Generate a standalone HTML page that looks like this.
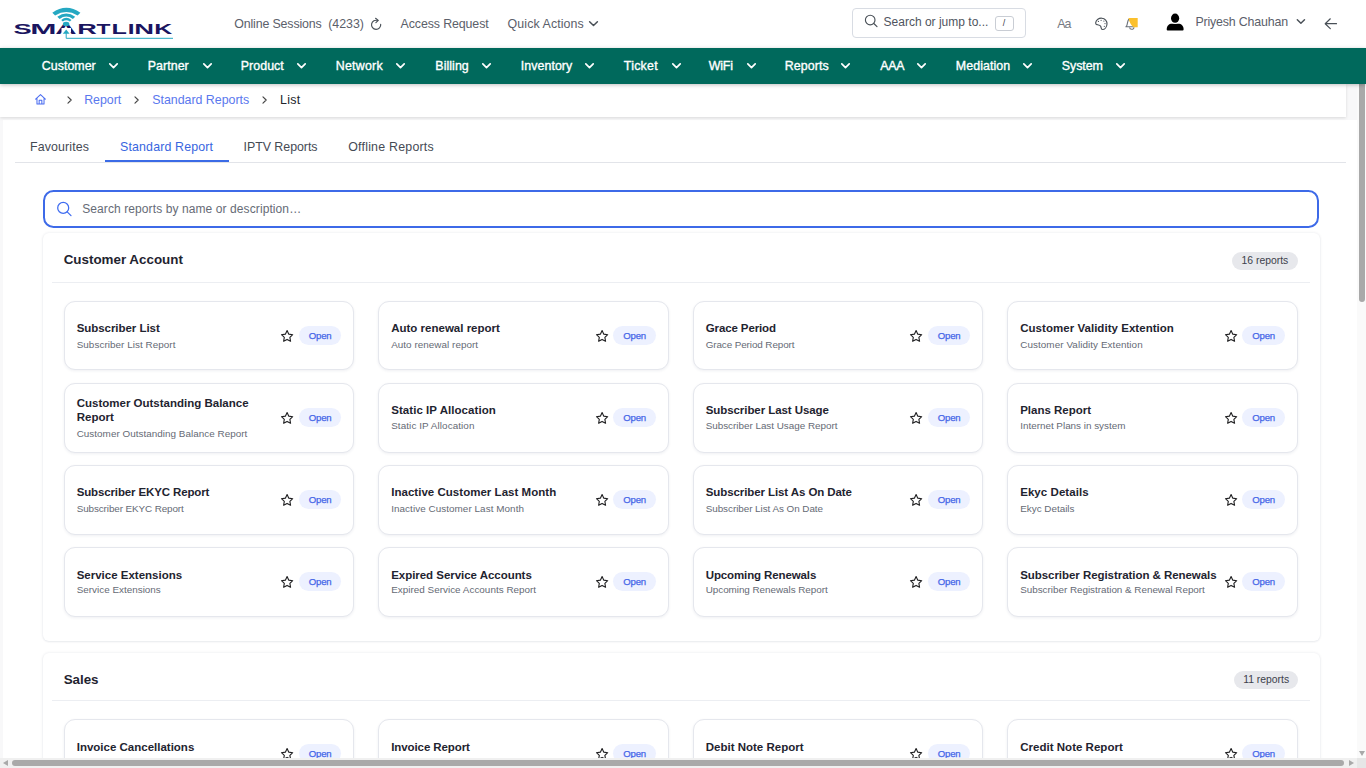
<!DOCTYPE html>
<html lang="en">
<head>
<meta charset="utf-8">
<title>Standard Reports</title>
<style>
*{box-sizing:border-box;margin:0;padding:0}
html,body{width:1366px;height:768px;overflow:hidden}
body{font-family:"Liberation Sans",sans-serif;background:#f8f8f9;color:#1f2430;position:relative;font-size:12.8px}
svg{display:block;overflow:visible}
#top{position:absolute;left:0;top:0;width:1366px;height:48px;background:#fff}
#top .t{position:absolute;top:16px;font-size:12.8px;line-height:16px;color:#5b606a;white-space:nowrap}
#top svg{position:absolute}
#gsearch{position:absolute;left:852px;top:8px;width:174px;height:29.5px;border:1px solid #d8dce3;border-radius:4px;background:#fff}
#gsearch span{position:absolute;top:5px;font-size:12px;line-height:16px;color:#4f545e;white-space:nowrap}
#gsearch kbd{position:absolute;left:141.500px;top:7px;width:19px;height:14.500px;border:1px solid #c9cdd4;border-radius:3px;font-family:"Liberation Sans",sans-serif;font-size:9px;line-height:12.500px;text-align:center;color:#3c4048}
#nav{position:absolute;left:0;top:48px;width:1366px;height:36px;background:#00695c;box-shadow:0 1px 4px rgba(0,0,0,.25);z-index:5}
#nav .n{position:absolute;top:10px;font-size:12.8px;line-height:16px;color:#fff;white-space:nowrap;-webkit-text-stroke:0.35px #fff}
#nav svg{position:absolute;top:15px;width:9px;height:6px}
#bc{position:absolute;left:0;top:84px;width:1346px;height:33px;background:#fff;box-shadow:0 1px 3px rgba(0,0,0,.13)}
#bc .b{position:absolute;top:8px;font-size:12.8px;line-height:16px;white-space:nowrap;color:#5a78ee}
#bc svg{position:absolute}
#main{position:absolute;left:3px;top:120px;width:1354px;height:648px;background:#fff}
.tab{position:absolute;top:139px;font-size:12.8px;line-height:16px;color:#454a54;white-space:nowrap}
.tab.act{color:#3866e0}
#tabline{position:absolute;left:15px;top:162px;width:1331px;height:1px;background:#e2e4e9}
#tabact{position:absolute;left:105px;top:159.5px;width:124px;height:2.5px;background:#3b6be6}
#search{position:absolute;left:42.600px;top:190px;width:1276px;height:38px;border:2px solid #3d6ae8;border-radius:10.500px;background:#fff}
#search span{position:absolute;top:9.500px;font-size:12px;line-height:14px;color:#666b76;white-space:nowrap}
#search svg{position:absolute}
.sec{position:absolute;left:42.5px;width:1277px;background:#fff;border-radius:6px;box-shadow:0 0 3px rgba(20,30,70,.10),0 1px 2px rgba(20,30,70,.05)}
.sec h2{position:absolute;left:21.200px;top:17.500px;font-size:13.4px;line-height:18px;font-weight:bold;color:#1f2430;white-space:nowrap}
.sec .badge{position:absolute;right:21.500px;top:19px;width:66.200px;height:18.400px;border-radius:9.200px;background:#e7e8ec;font-size:10.4px;line-height:18.400px;color:#3c414b;white-space:nowrap;text-align:center}
.sec .hr{position:absolute;left:9px;top:49.5px;width:1258px;height:1px;background:#eceef2}
.card{position:absolute;width:290.5px;height:69.8px;border:1px solid #e5e7ed;border-radius:11px;background:#fff;box-shadow:0 1px 3px rgba(30,40,90,.07)}
.card .ti{position:absolute;left:12.200px;font-size:11.5px;line-height:14px;font-weight:bold;color:#1f2430;white-space:nowrap}
.card .de{position:absolute;left:12.200px;font-size:9.9px;line-height:12px;color:#656a75;white-space:nowrap}
.card .open{position:absolute;left:234.400px;top:24.200px;width:42.5px;height:19.2px;border-radius:10px;background:#edf1ff;color:#4566e8;font-size:9.6px;line-height:19.2px;text-align:center;letter-spacing:-0.2px;-webkit-text-stroke:0.25px #4566e8}
.card svg{position:absolute;left:215.700px;top:27.400px;width:14.200px;height:14.200px}
#vsb{position:absolute;left:1357px;top:84px;width:9px;height:674px;background:#fafafa}
#vsb i{position:absolute;left:2px;top:0;width:6px;height:218px;background:#a9a9a9;border-radius:0 0 3px 3px}
#hsb{position:absolute;left:0;top:758px;width:1366px;height:10px;background:#f0f0f0}
#hsb i{position:absolute;left:12px;top:2px;width:1332px;height:6px;background:#a9a9a9;border-radius:3px}
.arr{position:absolute;width:0;height:0}
</style>
</head>
<body>
<div id="main"></div>
<div id="bc"><svg viewBox="0 0 24 24" style="left:33.700px;top:9.200px;width:13px;height:13px"><path d="M3 11.5L12 3l9 8.500M5.500 10v10.500h13V10M9.500 20.500v-7h5v7" fill="none" stroke="#4a6cf0" stroke-width="1.9" stroke-linejoin="round" stroke-linecap="round"/></svg><svg viewBox="0 0 6 9" style="left:66.5px;top:11.500px;width:5.500px;height:8px"><path d="M1 1l3.600 3.500L1 8" fill="none" stroke="#444" stroke-width="1.300" stroke-linecap="round" stroke-linejoin="round"/></svg><span class="b" style="left:84.20px;font-size:12.4px;letter-spacing:-0.022px;">Report</span><svg viewBox="0 0 6 9" style="left:134.2px;top:11.500px;width:5.500px;height:8px"><path d="M1 1l3.600 3.500L1 8" fill="none" stroke="#444" stroke-width="1.300" stroke-linecap="round" stroke-linejoin="round"/></svg><span class="b" style="left:152.20px;font-size:12.4px;letter-spacing:-0.006px;">Standard Reports</span><svg viewBox="0 0 6 9" style="left:262.3px;top:11.500px;width:5.500px;height:8px"><path d="M1 1l3.600 3.500L1 8" fill="none" stroke="#444" stroke-width="1.300" stroke-linecap="round" stroke-linejoin="round"/></svg><span class="b" style="left:280.00px;font-size:12.4px;letter-spacing:0.315px;color:#22252b">List</span></div>
<span class="tab" style="left:30.00px;font-size:12.4px;letter-spacing:0.117px;">Favourites</span><span class="tab act" style="left:120.00px;font-size:12.4px;letter-spacing:0.152px;">Standard Report</span><span class="tab" style="left:243.50px;font-size:12.4px;letter-spacing:-0.028px;">IPTV Reports</span><span class="tab" style="left:348.20px;font-size:12.4px;letter-spacing:0.222px;">Offline Reports</span><div id="tabline"></div><div id="tabact"></div>
<div id="search"><svg viewBox="0 0 40 34" style="left:0;top:0;width:40px;height:34px"><circle cx="18.200" cy="15.900" r="5.500" fill="none" stroke="#3f6cf0" stroke-width="1.250"/><path d="M22.200 19.900L26 23.600" stroke="#3f6cf0" stroke-width="1.250" stroke-linecap="round"/></svg><span class="" style="left:37.60px;font-size:12px;letter-spacing:0.095px;">Search reports by name or description…</span></div>
<div class="sec" style="top:233.0px;height:407.5px"><h2 style="top:17.50px;letter-spacing:-0.005px">Customer Account</h2><div class="badge" style="top:18.60px;width:66.2px">16 reports</div><div class="hr" style="top:49.00px"></div><div class="card" style="left:21.0px;top:67.60px"><div class="ti" style="top:19.40px;letter-spacing:-0.050px;">Subscriber List</div><div class="de" style="top:37.40px;letter-spacing:0.049px;">Subscriber List Report</div><svg viewBox="0 0 24 24"><path d="M12 2.6l2.9 6.1 6.6.9-4.8 4.6 1.2 6.6L12 17.6l-5.9 3.2 1.2-6.6L2.5 9.6l6.6-.9z" fill="none" stroke="#1d1d1f" stroke-width="1.850" stroke-linejoin="round"/></svg><div class="open">Open</div></div><div class="card" style="left:335.5px;top:67.60px"><div class="ti" style="top:19.40px;letter-spacing:0.004px;">Auto renewal report</div><div class="de" style="top:37.40px;letter-spacing:0.038px;">Auto renewal report</div><svg viewBox="0 0 24 24"><path d="M12 2.6l2.9 6.1 6.6.9-4.8 4.6 1.2 6.6L12 17.6l-5.9 3.2 1.2-6.6L2.5 9.6l6.6-.9z" fill="none" stroke="#1d1d1f" stroke-width="1.850" stroke-linejoin="round"/></svg><div class="open">Open</div></div><div class="card" style="left:650.0px;top:67.60px"><div class="ti" style="top:19.40px;letter-spacing:-0.112px;">Grace Period</div><div class="de" style="top:37.40px;letter-spacing:-0.097px;">Grace Period Report</div><svg viewBox="0 0 24 24"><path d="M12 2.6l2.9 6.1 6.6.9-4.8 4.6 1.2 6.6L12 17.6l-5.9 3.2 1.2-6.6L2.5 9.6l6.6-.9z" fill="none" stroke="#1d1d1f" stroke-width="1.850" stroke-linejoin="round"/></svg><div class="open">Open</div></div><div class="card" style="left:964.5px;top:67.60px"><div class="ti" style="top:19.40px;letter-spacing:0.037px;">Customer Validity Extention</div><div class="de" style="top:37.40px;letter-spacing:0.073px;">Customer Validity Extention</div><svg viewBox="0 0 24 24"><path d="M12 2.6l2.9 6.1 6.6.9-4.8 4.6 1.2 6.6L12 17.6l-5.9 3.2 1.2-6.6L2.5 9.6l6.6-.9z" fill="none" stroke="#1d1d1f" stroke-width="1.850" stroke-linejoin="round"/></svg><div class="open">Open</div></div><div class="card" style="left:21.0px;top:150.00px"><div class="ti" style="top:12.00px;">Customer Outstanding Balance<br>Report</div><div class="de" style="top:44.00px;letter-spacing:0.028px;">Customer Outstanding Balance Report</div><svg viewBox="0 0 24 24"><path d="M12 2.6l2.9 6.1 6.6.9-4.8 4.6 1.2 6.6L12 17.6l-5.9 3.2 1.2-6.6L2.5 9.6l6.6-.9z" fill="none" stroke="#1d1d1f" stroke-width="1.850" stroke-linejoin="round"/></svg><div class="open">Open</div></div><div class="card" style="left:335.5px;top:150.00px"><div class="ti" style="top:19.00px;letter-spacing:0.055px;">Static IP Allocation</div><div class="de" style="top:36.00px;letter-spacing:0.086px;">Static IP Allocation</div><svg viewBox="0 0 24 24"><path d="M12 2.6l2.9 6.1 6.6.9-4.8 4.6 1.2 6.6L12 17.6l-5.9 3.2 1.2-6.6L2.5 9.6l6.6-.9z" fill="none" stroke="#1d1d1f" stroke-width="1.850" stroke-linejoin="round"/></svg><div class="open">Open</div></div><div class="card" style="left:650.0px;top:150.00px"><div class="ti" style="top:19.00px;letter-spacing:-0.070px;">Subscriber Last Usage</div><div class="de" style="top:36.00px;letter-spacing:-0.019px;">Subscriber Last Usage Report</div><svg viewBox="0 0 24 24"><path d="M12 2.6l2.9 6.1 6.6.9-4.8 4.6 1.2 6.6L12 17.6l-5.9 3.2 1.2-6.6L2.5 9.6l6.6-.9z" fill="none" stroke="#1d1d1f" stroke-width="1.850" stroke-linejoin="round"/></svg><div class="open">Open</div></div><div class="card" style="left:964.5px;top:150.00px"><div class="ti" style="top:19.00px;letter-spacing:-0.011px;">Plans Report</div><div class="de" style="top:36.00px;letter-spacing:-0.006px;">Internet Plans in system</div><svg viewBox="0 0 24 24"><path d="M12 2.6l2.9 6.1 6.6.9-4.8 4.6 1.2 6.6L12 17.6l-5.9 3.2 1.2-6.6L2.5 9.6l6.6-.9z" fill="none" stroke="#1d1d1f" stroke-width="1.850" stroke-linejoin="round"/></svg><div class="open">Open</div></div><div class="card" style="left:21.0px;top:231.90px"><div class="ti" style="top:19.10px;letter-spacing:-0.134px;">Subscriber EKYC Report</div><div class="de" style="top:37.10px;letter-spacing:-0.102px;">Subscriber EKYC Report</div><svg viewBox="0 0 24 24"><path d="M12 2.6l2.9 6.1 6.6.9-4.8 4.6 1.2 6.6L12 17.6l-5.9 3.2 1.2-6.6L2.5 9.6l6.6-.9z" fill="none" stroke="#1d1d1f" stroke-width="1.850" stroke-linejoin="round"/></svg><div class="open">Open</div></div><div class="card" style="left:335.5px;top:231.90px"><div class="ti" style="top:19.10px;letter-spacing:0.028px;">Inactive Customer Last Month</div><div class="de" style="top:37.10px;letter-spacing:0.058px;">Inactive Customer Last Month</div><svg viewBox="0 0 24 24"><path d="M12 2.6l2.9 6.1 6.6.9-4.8 4.6 1.2 6.6L12 17.6l-5.9 3.2 1.2-6.6L2.5 9.6l6.6-.9z" fill="none" stroke="#1d1d1f" stroke-width="1.850" stroke-linejoin="round"/></svg><div class="open">Open</div></div><div class="card" style="left:650.0px;top:231.90px"><div class="ti" style="top:19.10px;letter-spacing:-0.089px;">Subscriber List As On Date</div><div class="de" style="top:37.10px;letter-spacing:-0.049px;">Subscriber List As On Date</div><svg viewBox="0 0 24 24"><path d="M12 2.6l2.9 6.1 6.6.9-4.8 4.6 1.2 6.6L12 17.6l-5.9 3.2 1.2-6.6L2.5 9.6l6.6-.9z" fill="none" stroke="#1d1d1f" stroke-width="1.850" stroke-linejoin="round"/></svg><div class="open">Open</div></div><div class="card" style="left:964.5px;top:231.90px"><div class="ti" style="top:19.10px;letter-spacing:0.055px;">Ekyc Details</div><div class="de" style="top:37.10px;letter-spacing:-0.006px;">Ekyc Details</div><svg viewBox="0 0 24 24"><path d="M12 2.6l2.9 6.1 6.6.9-4.8 4.6 1.2 6.6L12 17.6l-5.9 3.2 1.2-6.6L2.5 9.6l6.6-.9z" fill="none" stroke="#1d1d1f" stroke-width="1.850" stroke-linejoin="round"/></svg><div class="open">Open</div></div><div class="card" style="left:21.0px;top:314.10px"><div class="ti" style="top:19.90px;letter-spacing:-0.004px;">Service Extensions</div><div class="de" style="top:35.90px;letter-spacing:0.006px;">Service Extensions</div><svg viewBox="0 0 24 24"><path d="M12 2.6l2.9 6.1 6.6.9-4.8 4.6 1.2 6.6L12 17.6l-5.9 3.2 1.2-6.6L2.5 9.6l6.6-.9z" fill="none" stroke="#1d1d1f" stroke-width="1.850" stroke-linejoin="round"/></svg><div class="open">Open</div></div><div class="card" style="left:335.5px;top:314.10px"><div class="ti" style="top:19.90px;letter-spacing:-0.037px;">Expired Service Accounts</div><div class="de" style="top:35.90px;letter-spacing:0.019px;">Expired Service Accounts Report</div><svg viewBox="0 0 24 24"><path d="M12 2.6l2.9 6.1 6.6.9-4.8 4.6 1.2 6.6L12 17.6l-5.9 3.2 1.2-6.6L2.5 9.6l6.6-.9z" fill="none" stroke="#1d1d1f" stroke-width="1.850" stroke-linejoin="round"/></svg><div class="open">Open</div></div><div class="card" style="left:650.0px;top:314.10px"><div class="ti" style="top:19.90px;letter-spacing:-0.113px;">Upcoming Renewals</div><div class="de" style="top:35.90px;letter-spacing:-0.041px;">Upcoming Renewals Report</div><svg viewBox="0 0 24 24"><path d="M12 2.6l2.9 6.1 6.6.9-4.8 4.6 1.2 6.6L12 17.6l-5.9 3.2 1.2-6.6L2.5 9.6l6.6-.9z" fill="none" stroke="#1d1d1f" stroke-width="1.850" stroke-linejoin="round"/></svg><div class="open">Open</div></div><div class="card" style="left:964.5px;top:314.10px"><div class="ti" style="top:19.90px;letter-spacing:-0.051px;">Subscriber Registration &amp; Renewals</div><div class="de" style="top:35.90px;letter-spacing:-0.022px;">Subscriber Registration &amp; Renewal Report</div><svg viewBox="0 0 24 24"><path d="M12 2.6l2.9 6.1 6.6.9-4.8 4.6 1.2 6.6L12 17.6l-5.9 3.2 1.2-6.6L2.5 9.6l6.6-.9z" fill="none" stroke="#1d1d1f" stroke-width="1.850" stroke-linejoin="round"/></svg><div class="open">Open</div></div></div>
<div class="sec" style="top:652.5px;height:300px"><h2 style="top:18.00px;letter-spacing:-0.048px">Sales</h2><div class="badge" style="top:18.50px;width:63.7px">11 reports</div><div class="hr" style="top:47.50px"></div><div class="card" style="left:21.0px;top:66.50px"><div class="ti" style="top:20.00px;letter-spacing:0.000px;">Invoice Cancellations</div><div class="de" style="top:38.00px;">Invoice Cancellations Report</div><svg viewBox="0 0 24 24"><path d="M12 2.6l2.9 6.1 6.6.9-4.8 4.6 1.2 6.6L12 17.6l-5.9 3.2 1.2-6.6L2.5 9.6l6.6-.9z" fill="none" stroke="#1d1d1f" stroke-width="1.850" stroke-linejoin="round"/></svg><div class="open">Open</div></div><div class="card" style="left:335.5px;top:66.50px"><div class="ti" style="top:20.00px;letter-spacing:-0.087px;">Invoice Report</div><div class="de" style="top:38.00px;">Invoice Report</div><svg viewBox="0 0 24 24"><path d="M12 2.6l2.9 6.1 6.6.9-4.8 4.6 1.2 6.6L12 17.6l-5.9 3.2 1.2-6.6L2.5 9.6l6.6-.9z" fill="none" stroke="#1d1d1f" stroke-width="1.850" stroke-linejoin="round"/></svg><div class="open">Open</div></div><div class="card" style="left:650.0px;top:66.50px"><div class="ti" style="top:20.00px;letter-spacing:0.009px;">Debit Note Report</div><div class="de" style="top:38.00px;">Debit Note Report</div><svg viewBox="0 0 24 24"><path d="M12 2.6l2.9 6.1 6.6.9-4.8 4.6 1.2 6.6L12 17.6l-5.9 3.2 1.2-6.6L2.5 9.6l6.6-.9z" fill="none" stroke="#1d1d1f" stroke-width="1.850" stroke-linejoin="round"/></svg><div class="open">Open</div></div><div class="card" style="left:964.5px;top:66.50px"><div class="ti" style="top:20.00px;letter-spacing:0.021px;">Credit Note Report</div><div class="de" style="top:38.00px;">Credit Note Report</div><svg viewBox="0 0 24 24"><path d="M12 2.6l2.9 6.1 6.6.9-4.8 4.6 1.2 6.6L12 17.6l-5.9 3.2 1.2-6.6L2.5 9.6l6.6-.9z" fill="none" stroke="#1d1d1f" stroke-width="1.850" stroke-linejoin="round"/></svg><div class="open">Open</div></div></div>
<div id="top"><svg id="logo" viewBox="0 0 200 48" style="left:0;top:0;width:200px;height:48px">
<text y="33.900" font-family="'Liberation Sans',sans-serif" font-weight="bold" font-size="15.4" fill="#1a1560"><tspan x="13.41" textLength="18.15" lengthAdjust="spacingAndGlyphs">S</tspan><tspan x="30.19" textLength="26.22" lengthAdjust="spacingAndGlyphs">M</tspan><tspan x="55.36" textLength="21.30" lengthAdjust="spacingAndGlyphs">A</tspan><tspan x="77.38" textLength="19.59" lengthAdjust="spacingAndGlyphs">R</tspan><tspan x="96.45" textLength="13.90" lengthAdjust="spacingAndGlyphs">T</tspan><tspan x="111.42" textLength="15.36" lengthAdjust="spacingAndGlyphs">L</tspan><tspan x="127.67" textLength="6.76" lengthAdjust="spacingAndGlyphs">I</tspan><tspan x="134.27" textLength="19.77" lengthAdjust="spacingAndGlyphs">N</tspan><tspan x="154.23" textLength="18.02" lengthAdjust="spacingAndGlyphs">K</tspan></text>
<rect x="61.500" y="28" width="9.500" height="4.500" fill="#fff"/>
<g fill="#25a8c2" transform="translate(0,0.3)">
<path d="M52.300 12.400 Q66.300 2.600 80.400 12.400 L77.600 15.200 Q66.300 8.300 55.100 15.200 Z"/>
<path d="M57.300 16.400 Q66.300 9.900 75.200 16.400 L72.900 18.700 Q66.300 13.800 59.600 18.700 Z"/>
<path d="M61.200 19.700 Q66.300 15.300 71.500 19.700 L69.900 21.300 Q66.300 18.400 62.800 21.300 Z"/>
</g>
<ellipse cx="66.100" cy="23.900" rx="3.200" ry="2.200" fill="#25a8c2"/>
<path d="M66.200 29.400 L62.800 33.700 H69.600 Z" fill="#25a8c2"/>
<path d="M66.200 33 V38.300 H173" fill="none" stroke="#25a8c2" stroke-width="1"/>
</svg><span class="t" style="left:234.20px;font-size:12.4px;letter-spacing:-0.138px;">Online Sessions</span><span class="t" style="left:328.20px;font-size:12.4px;letter-spacing:-0.026px;">(4233)</span><span class="t" style="left:400.60px;font-size:12.4px;letter-spacing:-0.111px;">Access Request</span><span class="t" style="left:507.60px;font-size:12.4px;letter-spacing:0.086px;">Quick Actions</span><div id="gsearch"><span class="" style="left:30.60px;font-size:12px;">Search or jump to...</span><kbd>/</kbd></div><span class="t" style="left:1057.20px;font-size:12.4px;letter-spacing:-0.845px;top:15.500px;color:#777b84">Aa</span><span class="t" style="left:1195.40px;font-size:12.4px;letter-spacing:-0.167px;top:14px">Priyesh Chauhan</span><svg id="hicons" viewBox="0 0 1366 48" style="left:0;top:0;width:1366px;height:48px">
<g fill="none" stroke="#495057" stroke-linecap="round" stroke-linejoin="round">
<path d="M380.700 24.300 A4.600 4.600 0 1 1 377.700 20.500" stroke-width="1.150"/>
<path d="M375.600 18.300 L378.300 20.400 L375.900 22.600" stroke-width="1.150"/>
<path d="M589.600 21.700 L593.500 25.500 L597.400 21.700" stroke-width="1.500"/>
<circle cx="870.200" cy="20" r="4.800" stroke-width="1.150"/>
<path d="M873.800 23.500 L877 26.700" stroke-width="1.150"/>
<path d="M1095.700 22.600 C1096.100 19.700 1099 18 1101.800 18.200 C1105 18.400 1107.200 20.900 1107 24 C1106.800 27 1104.800 29.500 1102.400 29.500 C1100.900 29.500 1101.300 27.600 1100.700 26.300 C1100.100 25 1098.300 24.900 1096.900 24.600 C1095.900 24.400 1095.500 23.600 1095.700 22.600 Z" stroke-width="1.150"/>
<path d="M1128.700 19.300 C1127.500 20.800 1127.500 24 1126.700 25.900 L1125.900 26.800 H1134" stroke-width="1.100" stroke="#6a7078"/>
<path d="M1129.700 27.800 a2.100 1.500 0 0 0 4.200 0" stroke-width="1.100" stroke="#6a7078"/>
<path d="M1297.300 19.700 L1300.900 23.300 L1304.500 19.700" stroke-width="1.450"/>
<path d="M1336.500 23.700 H1325.300 M1330.300 18.800 L1325.200 23.700 L1330.300 28.600" stroke-width="1.200"/>
</g>
<g fill="#495057"><circle cx="1098.400" cy="21.400" r="0.600"/><circle cx="1101.100" cy="20.300" r="0.600"/><circle cx="1103.900" cy="21.100" r="0.600"/><circle cx="1105" cy="23.600" r="0.600"/><circle cx="1104.300" cy="26.300" r="0.600"/></g>
<path d="M1128.300 18.100 H1137.700 V27.200 H1133.600 C1131 25.400 1129.100 22 1128.500 18.100 Z" fill="#fbc02d"/>
<path d="M1166.700 29.400 C1166.700 25.600 1169 23.700 1172 23.700 H1178.300 C1181.300 23.700 1183.600 25.600 1183.600 29.400 Q1183.600 30.400 1182.600 30.400 H1167.700 Q1166.700 30.400 1166.700 29.400 Z" fill="#000"/>
<ellipse cx="1175.100" cy="18.200" rx="5.100" ry="5.700" fill="#fff"/>
<ellipse cx="1175.100" cy="18.200" rx="4.100" ry="4.650" fill="#000"/>
</svg></div>
<div id="nav"><span class="n" style="left:41.80px;font-size:12.4px;letter-spacing:0.034px;">Customer</span><svg viewBox="0 0 9 6" style="left:109px"><path d="M0.8 0.9 L4.5 4.6 L8.2 0.9" fill="none" stroke="#fff" stroke-width="1.7" stroke-linecap="round" stroke-linejoin="round"/></svg><span class="n" style="left:147.80px;font-size:12.4px;letter-spacing:0.052px;">Partner</span><svg viewBox="0 0 9 6" style="left:202.5px"><path d="M0.8 0.9 L4.5 4.6 L8.2 0.9" fill="none" stroke="#fff" stroke-width="1.7" stroke-linecap="round" stroke-linejoin="round"/></svg><span class="n" style="left:240.80px;font-size:12.4px;letter-spacing:0.041px;">Product</span><svg viewBox="0 0 9 6" style="left:297px"><path d="M0.8 0.9 L4.5 4.6 L8.2 0.9" fill="none" stroke="#fff" stroke-width="1.7" stroke-linecap="round" stroke-linejoin="round"/></svg><span class="n" style="left:335.80px;font-size:12.4px;letter-spacing:0.234px;">Network</span><svg viewBox="0 0 9 6" style="left:396px"><path d="M0.8 0.9 L4.5 4.6 L8.2 0.9" fill="none" stroke="#fff" stroke-width="1.7" stroke-linecap="round" stroke-linejoin="round"/></svg><span class="n" style="left:435.30px;font-size:12.4px;letter-spacing:0.064px;">Billing</span><svg viewBox="0 0 9 6" style="left:482px"><path d="M0.8 0.9 L4.5 4.6 L8.2 0.9" fill="none" stroke="#fff" stroke-width="1.7" stroke-linecap="round" stroke-linejoin="round"/></svg><span class="n" style="left:520.80px;font-size:12.4px;letter-spacing:0.058px;">Inventory</span><svg viewBox="0 0 9 6" style="left:585px"><path d="M0.8 0.9 L4.5 4.6 L8.2 0.9" fill="none" stroke="#fff" stroke-width="1.7" stroke-linecap="round" stroke-linejoin="round"/></svg><span class="n" style="left:623.80px;font-size:12.4px;letter-spacing:0.253px;">Ticket</span><svg viewBox="0 0 9 6" style="left:671.5px"><path d="M0.8 0.9 L4.5 4.6 L8.2 0.9" fill="none" stroke="#fff" stroke-width="1.7" stroke-linecap="round" stroke-linejoin="round"/></svg><span class="n" style="left:708.80px;font-size:12.4px;letter-spacing:-0.225px;">WiFi</span><svg viewBox="0 0 9 6" style="left:746.5px"><path d="M0.8 0.9 L4.5 4.6 L8.2 0.9" fill="none" stroke="#fff" stroke-width="1.7" stroke-linecap="round" stroke-linejoin="round"/></svg><span class="n" style="left:784.80px;font-size:12.4px;letter-spacing:0.089px;">Reports</span><svg viewBox="0 0 9 6" style="left:841px"><path d="M0.8 0.9 L4.5 4.6 L8.2 0.9" fill="none" stroke="#fff" stroke-width="1.7" stroke-linecap="round" stroke-linejoin="round"/></svg><span class="n" style="left:880.30px;font-size:12.4px;letter-spacing:-0.325px;">AAA</span><svg viewBox="0 0 9 6" style="left:916.5px"><path d="M0.8 0.9 L4.5 4.6 L8.2 0.9" fill="none" stroke="#fff" stroke-width="1.7" stroke-linecap="round" stroke-linejoin="round"/></svg><span class="n" style="left:955.80px;font-size:12.4px;letter-spacing:0.086px;">Mediation</span><svg viewBox="0 0 9 6" style="left:1023px"><path d="M0.8 0.9 L4.5 4.6 L8.2 0.9" fill="none" stroke="#fff" stroke-width="1.7" stroke-linecap="round" stroke-linejoin="round"/></svg><span class="n" style="left:1061.80px;font-size:12.4px;letter-spacing:-0.062px;">System</span><svg viewBox="0 0 9 6" style="left:1115.5px"><path d="M0.8 0.9 L4.5 4.6 L8.2 0.9" fill="none" stroke="#fff" stroke-width="1.7" stroke-linecap="round" stroke-linejoin="round"/></svg></div>
<div id="vsb"><i></i><span class="arr" style="left:1.500px;top:667px;border-left:3.500px solid transparent;border-right:3.500px solid transparent;border-top:5px solid #a9a9a9"></span></div><div id="hsb"><i></i><span class="arr" style="left:3px;top:1.500px;border-top:3.500px solid transparent;border-bottom:3.500px solid transparent;border-right:5px solid #a9a9a9"></span><span class="arr" style="left:1349px;top:1.500px;border-top:3.500px solid transparent;border-bottom:3.500px solid transparent;border-left:5px solid #a9a9a9"></span><b style="position:absolute;left:1357px;top:0;width:9px;height:10px;background:#e6e6e6"></b></div>
</body>
</html>
